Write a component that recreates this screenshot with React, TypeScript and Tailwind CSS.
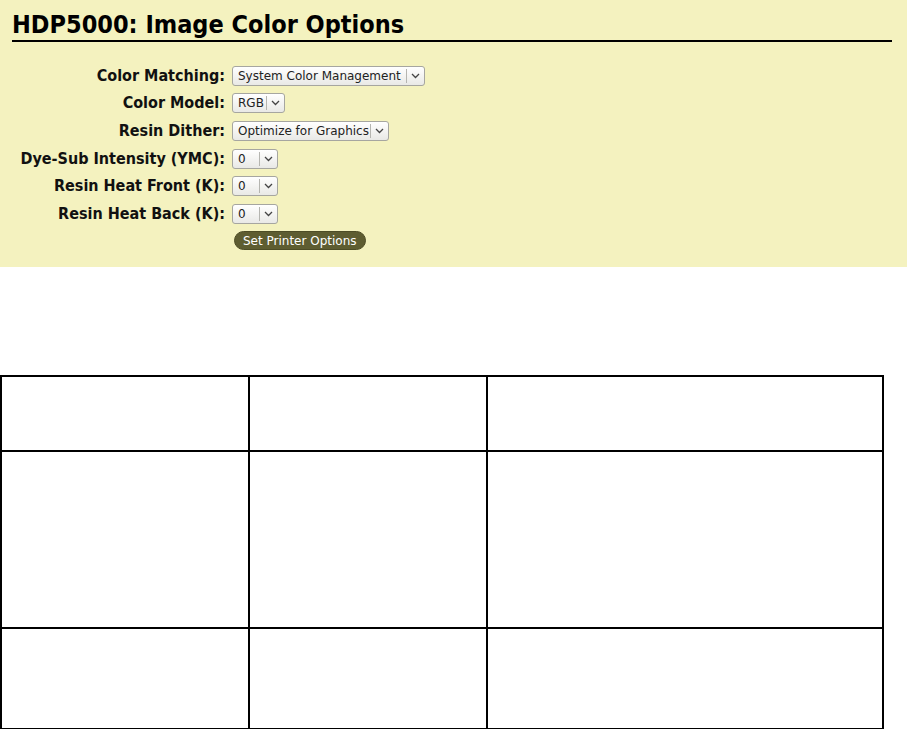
import React from 'react';

const font = { fontFamily: '"DejaVu Sans", Verdana, sans-serif' };
const condensed = { fontFamily: '"DejaVu Sans Condensed", "DejaVu Sans", sans-serif' };

interface FakeSelectProps {
  value: string;
  width: number;
}

// Native-looking select box with separator and chevron
function FakeSelect({ value, width }: FakeSelectProps) {
  return (
    <div
      className="flex h-[20px] items-stretch rounded-[3px] border border-[#a6a6a0] bg-gradient-to-b from-white to-[#e9e9e6] text-[12px] leading-none text-[#222]"
      style={{ width }}
    >
      <span className="flex flex-1 items-center pl-[5px] whitespace-nowrap">{value}</span>
      <span className="my-[2px] w-px bg-[#b5b5b0]" />
      <span className="flex w-[17px] items-center justify-center">
        <svg width="9" height="6" viewBox="0 0 9 6" fill="none">
          <path d="M1 1l3.5 3.5L8 1" stroke="#444" strokeWidth="1.3" />
        </svg>
      </span>
    </div>
  );
}

const rows: { label: string; value: string; width: number }[] = [
  { label: 'Color Matching:', value: 'System Color Management', width: 193 },
  { label: 'Color Model:', value: 'RGB', width: 53 },
  { label: 'Resin Dither:', value: 'Optimize for Graphics', width: 157 },
  { label: 'Dye-Sub Intensity (YMC):', value: '0', width: 46 },
  { label: 'Resin Heat Front (K):', value: '0', width: 46 },
  { label: 'Resin Heat Back (K):', value: '0', width: 46 },
];

export default function App() {
  return (
    <div className="min-h-[729px] w-[907px] bg-white text-black" style={font}>
      {/* Options panel */}
      <div className="h-[267px] bg-[#f4f2bf] pt-[11px]">
        <h1
          className="ml-[12px] w-[880px] border-b-2 border-black pb-[2px] text-[25px] font-bold leading-[27px]"
          style={condensed}
        >
          HDP5000: Image Color Options
        </h1>
        <div className="mt-[20px] flex flex-col">
          {rows.map((row) => (
            <div key={row.label} className="flex h-[27.6px] items-center">
              <label
                className="w-[225px] text-right text-[16px] font-bold leading-none whitespace-nowrap text-[#111]"
                style={condensed}
              >
                {row.label}
              </label>
              <div className="ml-[7px]">
                <FakeSelect value={row.value} width={row.width} />
              </div>
            </div>
          ))}
          <div className="flex h-[26px] items-center">
            <div className="w-[225px]" />
            <button className="ml-[9px] h-[19px] rounded-full border border-[#4e4d26] bg-[#5e5d31] px-[8px] text-[12px] leading-none text-white">
              Set Printer Options
            </button>
          </div>
        </div>
      </div>

      {/* Empty layout table */}
      <div className="pt-[108px]">
        <table className="border-collapse border-2 border-black">
          <tbody>
            <tr className="h-[75px]">
              <td className="w-[248px] border-2 border-black" />
              <td className="w-[238px] border-2 border-black" />
              <td className="w-[396px] border-2 border-black" />
            </tr>
            <tr className="h-[177px]">
              <td className="border-2 border-black" />
              <td className="border-2 border-black" />
              <td className="border-2 border-black" />
            </tr>
            <tr className="h-[101px]">
              <td className="border-2 border-black" />
              <td className="border-2 border-black" />
              <td className="border-2 border-black" />
            </tr>
          </tbody>
        </table>
      </div>
    </div>
  );
}
